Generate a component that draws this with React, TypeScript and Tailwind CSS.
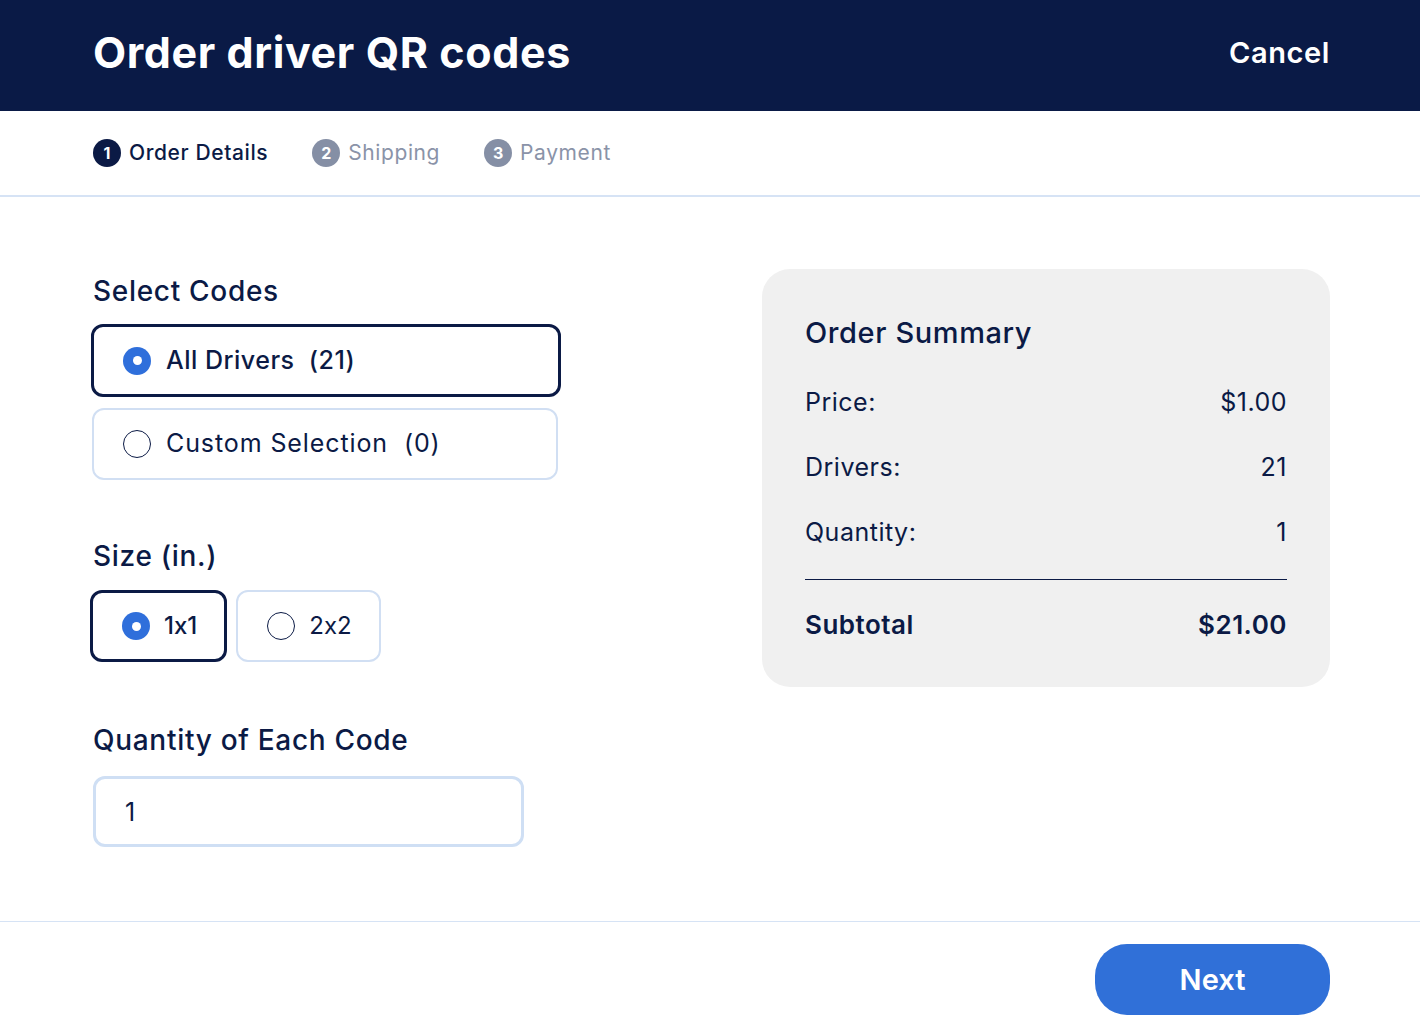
import { useState } from "react";

function Radio({ checked }: { checked: boolean }) {
  return checked ? (
    <span className="flex h-[28px] w-[28px] shrink-0 items-center justify-center rounded-full bg-[#2f6fdb]">
      <span className="h-[9px] w-[9px] rounded-full bg-white" />
    </span>
  ) : (
    <span className="h-[28px] w-[28px] shrink-0 rounded-full border border-[#0b1a45] bg-white" />
  );
}

export default function App() {
  const [selection, setSelection] = useState("all");
  const [size, setSize] = useState("1x1");
  const [qty, setQty] = useState("1");

  const steps = [
    { n: 1, label: "Order Details", active: true },
    { n: 2, label: "Shipping", active: false },
    { n: 3, label: "Payment", active: false },
  ];

  const rows = [
    { label: "Price:", value: "$1.00" },
    { label: "Drivers:", value: "21" },
    { label: "Quantity:", value: qty || "0" },
  ];

  return (
    <div className="flex h-screen flex-col bg-white font-['Inter','Noto_Sans',sans-serif] text-[#0b1a45] [font-feature-settings:'calt'_0]">
      {/* header */}
      <header className="flex h-[111px] shrink-0 items-center justify-between bg-[#0a1a46] pb-[6px] pl-[93px] pr-[90px]">
        <h1 className="text-[43px] font-bold tracking-[0.6px] text-white">Order driver QR codes</h1>
        <button className="text-[29px] font-semibold tracking-[0.6px] text-white">Cancel</button>
      </header>

      {/* steps */}
      <nav className="flex h-[86px] shrink-0 items-center gap-[44px] border-b-2 border-[#d6e3f5] px-[93px]">
        {steps.map((s) => (
          <div key={s.n} className="flex items-center gap-[8px]">
            <span
              className={`flex h-[28px] w-[28px] items-center justify-center rounded-full text-[16px] font-bold text-white ${
                s.active ? "bg-[#0b1a45]" : "bg-[#858fa5]"
              }`}
            >
              {s.n}
            </span>
            <span
              className={`text-[21px] tracking-[0.6px] ${
                s.active ? "font-medium text-[#0b1a45]" : "text-[#8a93a8]"
              }`}
            >
              {s.label}
            </span>
          </div>
        ))}
      </nav>

      {/* main */}
      <main className="flex flex-1 items-start pt-[72px] pl-[93px] pr-[90px]">
        <div className="w-[669px] pt-[5px]">
          <h2 className="text-[28px] font-medium leading-[34px] tracking-[0.7px]">Select Codes</h2>
          <div className="mt-[16px] flex w-[468px] flex-col gap-[11px]">
            <button
              onClick={() => setSelection("all")}
              className={`-ml-[2px] flex h-[73px] items-center gap-[15px] rounded-[12px] pl-[29px] text-left text-[25px] tracking-[0.5px] ${
                selection === "all" ? "border-[3px] border-[#0b1a45] font-medium" : "border-2 border-[#d1dff3]"
              }`}
            >
              <Radio checked={selection === "all"} />
              <span className="whitespace-pre">All Drivers  (21)</span>
            </button>
            <button
              onClick={() => setSelection("custom")}
              className={`-ml-[1px] flex h-[72px] w-[466px] items-center gap-[15px] rounded-[12px] pl-[29px] text-left text-[25px] tracking-[0.9px] ${
                selection === "custom" ? "border-[3px] border-[#0b1a45] font-medium" : "border-2 border-[#d1dff3]"
              }`}
            >
              <Radio checked={selection === "custom"} />
              <span className="whitespace-pre">Custom Selection  (0)</span>
            </button>
          </div>

          <h2 className="mt-[59px] text-[28px] font-medium leading-[34px] tracking-[0.7px]">Size (in.)</h2>
          <div className="mt-[17px] flex gap-[9px]">
            {["1x1", "2x2"].map((sz) => (
              <button
                key={sz}
                onClick={() => setSize(sz)}
                className={`flex h-[72px] items-center gap-[14px] rounded-[12px] pl-[29px] pr-[27px] text-[24px] first:-ml-[3px] ${
                  size === sz ? "border-[3px] border-[#0b1a45] font-medium" : "border-2 border-[#d1dff3]"
                }`}
              >
                <Radio checked={size === sz} />
                <span>{sz}</span>
              </button>
            ))}
          </div>

          <h2 className="mt-[61px] text-[28px] font-medium leading-[34px] tracking-[0.7px]">Quantity of Each Code</h2>
          <input
            value={qty}
            onChange={(e) => setQty(e.target.value)}
            className="mt-[19px] h-[71px] w-[431px] rounded-[12px] border-[3px] border-[#cfdff4] px-[29px] text-[25px] text-[#0b1a45] outline-none"
          />
        </div>

        <aside className="w-[568px] rounded-[28px] bg-[#f0f0f0] px-[43px] pt-[46px] pb-[46px]">
          <h3 className="text-[29px] font-medium leading-[36px] tracking-[0.6px]">Order Summary</h3>
          <div className="mt-[36px] flex flex-col gap-[35px]">
            {rows.map((r) => (
              <div key={r.label} className="flex items-center justify-between text-[25px] leading-[30px] tracking-[0.5px]">
                <span>{r.label}</span>
                <span>{r.value}</span>
              </div>
            ))}
          </div>
          <div className="mt-[32px] h-px bg-[#0b1a45]" />
          <div className="mt-[29px] flex items-center justify-between text-[26px] font-semibold leading-[32px] tracking-[0.5px]">
            <span>Subtotal</span>
            <span>$21.00</span>
          </div>
        </aside>
      </main>

      {/* footer */}
      <footer className="flex h-[111px] shrink-0 items-start justify-end border-t border-[#d6e3f5] pt-[22px] pr-[90px]">
        <button className="h-[71px] w-[235px] rounded-[32px] bg-[#3070d8] text-[29px] font-semibold text-white">
          Next
        </button>
      </footer>
    </div>
  );
}
